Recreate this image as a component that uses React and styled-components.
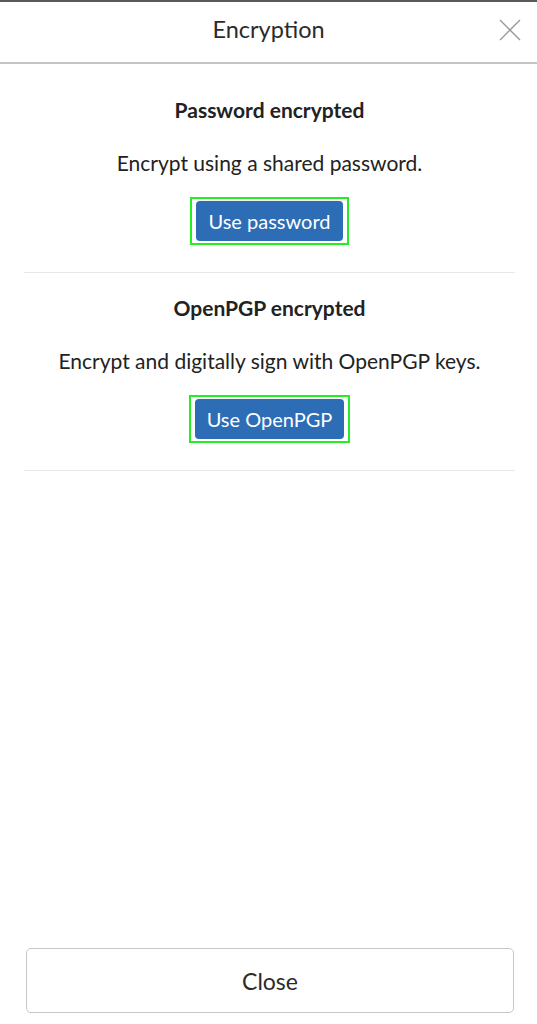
import styled, { createGlobalStyle } from "styled-components";

const GlobalStyle = createGlobalStyle`
  html, body {
    margin: 0;
    padding: 0;
    background: #fff;
    font-family: Lato, "Open Sans", sans-serif;
    color: #222;
  }
  * { box-sizing: border-box; }
`;

const options = [
  {
    title: "Password encrypted",
    text: "Encrypt using a shared password.",
    action: "Use password",
  },
  {
    title: "OpenPGP encrypted",
    text: "Encrypt and digitally sign with OpenPGP keys.",
    action: "Use OpenPGP",
  },
];

function App() {
  return (
    <Dialog>
      <GlobalStyle />
      <Header>
        <Title>Encryption</Title>
        <CloseIcon aria-label="Close">
          <svg width="22" height="22" viewBox="0 0 22 22">
            <path d="M1 1 L21 21 M21 1 L1 21" stroke="#9a9a9a" strokeWidth="1.4" fill="none" />
          </svg>
        </CloseIcon>
      </Header>
      <Body>
        {options.map((o) => (
          <Option key={o.title}>
            <OptionTitle>{o.title}</OptionTitle>
            <OptionText>{o.text}</OptionText>
            <Focus>
              <PrimaryButton>{o.action}</PrimaryButton>
            </Focus>
          </Option>
        ))}
      </Body>
      <Footer>
        <CloseButton>Close</CloseButton>
      </Footer>
    </Dialog>
  );
}

const Dialog = styled.div`
  display: flex;
  flex-direction: column;
  min-height: 100vh;
  border-top: 2px solid #5a5a5a;
`;

const Header = styled.header`
  position: relative;
  height: 62px;
  display: flex;
  align-items: center;
  justify-content: center;
  border-bottom: 2px solid #c4c4c4;
`;

const Title = styled.h1`
  margin: 0;
  margin-top: -6px;
  font-size: 23.5px;
  font-weight: 400;
  color: #2b2b2b;
`;

const CloseIcon = styled.button`
  position: absolute;
  right: 16px;
  top: 17px;
  padding: 0;
  border: 0;
  background: none;
  line-height: 0;
`;

const Body = styled.main`
  flex: 1;
  padding: 11px 22px 0 24px;
`;

const Option = styled.section`
  display: flex;
  flex-direction: column;
  align-items: center;
  padding: 22px 0 27px;
  border-bottom: 1px solid #e8e8e8;
`;

const OptionTitle = styled.h2`
  margin: 0 0 27px;
  font-size: 21px;
  line-height: 26px;
  font-weight: 700;
  color: #222;
`;

const OptionText = styled.p`
  margin: 0 0 21px;
  font-size: 21px;
  line-height: 26px;
  color: #222;
`;

const Focus = styled.div`
  padding: 2px 4px;
  border: 2px solid #22ee22;
`;

const PrimaryButton = styled.button`
  display: block;
  height: 40px;
  padding: 0 12px;
  border: 0;
  border-radius: 4px;
  background: #2c6db6;
  color: #fff;
  font-family: Lato, sans-serif;
  font-size: 20px;
`;

const Footer = styled.footer`
  padding: 0 23px 11px 26px;
`;

const CloseButton = styled.button`
  width: 100%;
  height: 65px;
  border: 1px solid #c6c6c6;
  border-radius: 5px;
  background: #fff;
  color: #2b2b2b;
  font-family: Lato, sans-serif;
  font-size: 23px;
`;

export default App;
